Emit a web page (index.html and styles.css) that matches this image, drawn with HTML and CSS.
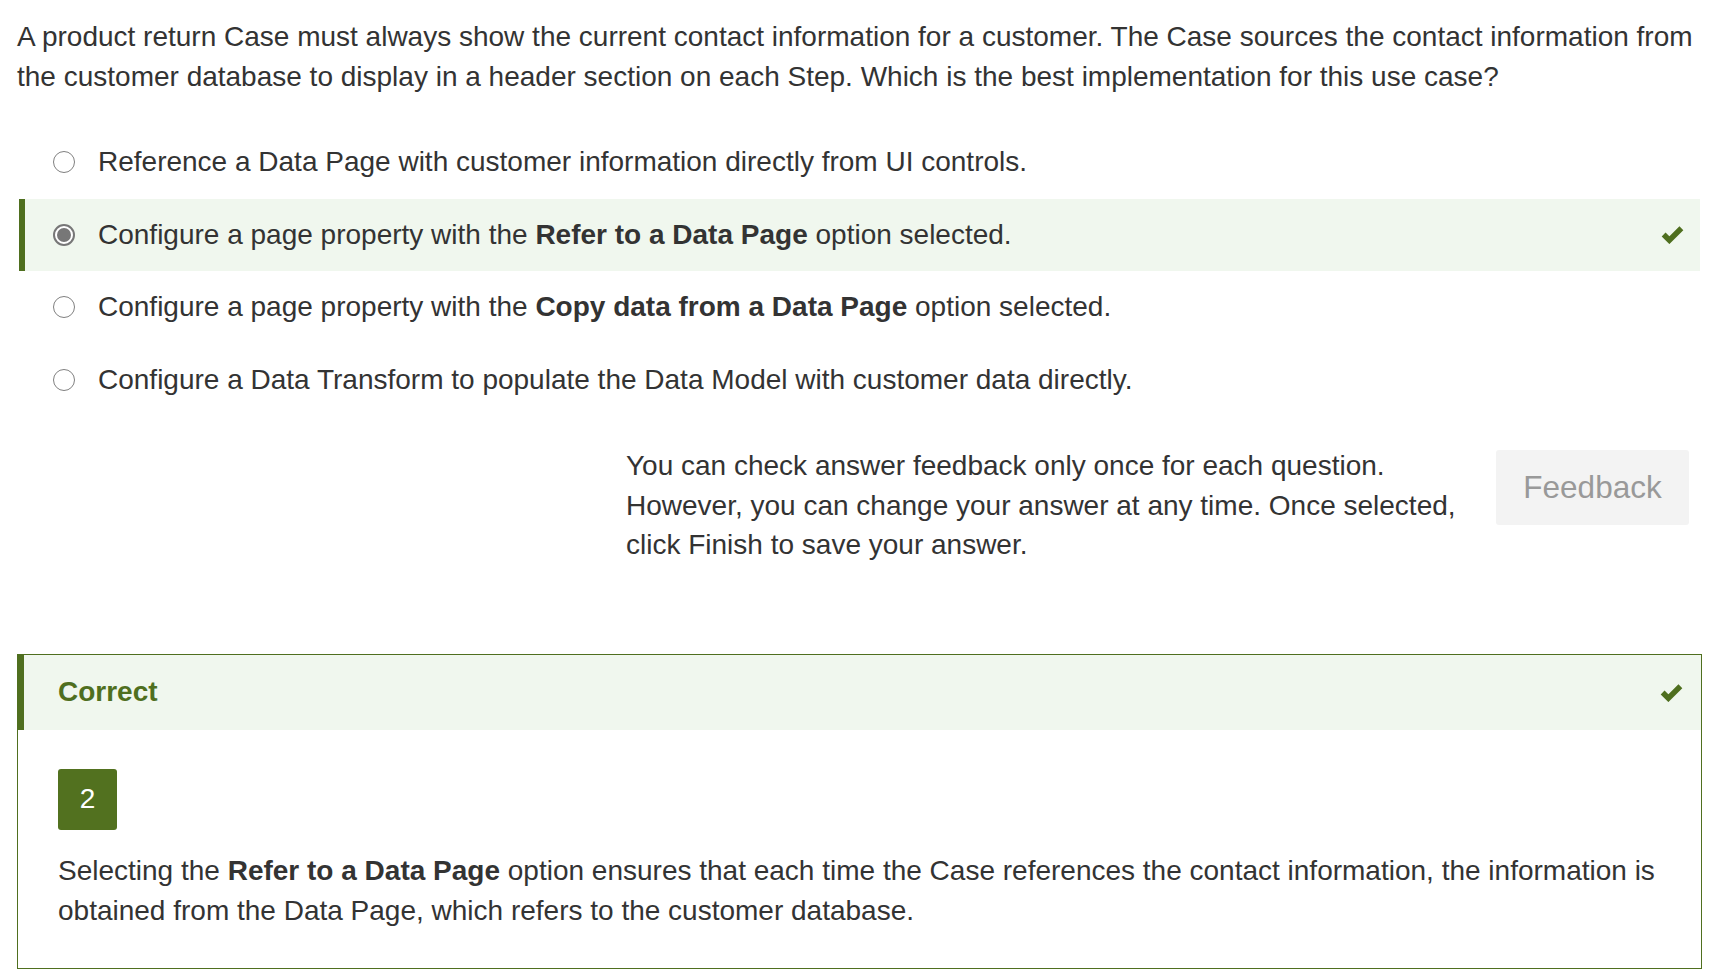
FILE: index.html
```html
<!DOCTYPE html>
<html lang="en">
<head>
<meta charset="utf-8">
<title>Question</title>
<link rel="stylesheet" href="styles.css">
</head>
<body>
<div class="page">
  <p class="question">A product return Case must always show the current contact information for a customer. The Case sources the contact information from the customer database to display in a header section on each Step. Which is the best implementation for this use case?</p>

  <div class="options">
    <div class="option">
      <span class="radio"></span>
      <span class="label">Reference a Data Page with customer information directly from UI controls.</span>
    </div>
    <div class="option selected">
      <span class="radio checked"></span>
      <span class="label">Configure a page property with the <b>Refer to a Data Page</b> option selected.</span>
      <svg class="check" viewBox="0 0 22 18" width="23" height="19"><polyline points="2.5,9 8,14.5 19.5,3" fill="none" stroke="#4f6f1f" stroke-width="5.2"/></svg>
    </div>
    <div class="option">
      <span class="radio"></span>
      <span class="label">Configure a page property with the <b>Copy data from a Data Page</b> option selected.</span>
    </div>
    <div class="option">
      <span class="radio"></span>
      <span class="label">Configure a Data Transform to populate the Data Model with customer data directly.</span>
    </div>
  </div>

  <div class="feedback-row">
    <p class="feedback-note">You can check answer feedback only once for each question. However, you can change your answer at any time. Once selected, click Finish to save your answer.</p>
    <button class="feedback-btn" type="button">Feedback</button>
  </div>

  <div class="result">
    <div class="result-head">
      <span class="result-title">Correct</span>
      <svg class="check" viewBox="0 0 22 18" width="23" height="19"><polyline points="2.5,9 8,14.5 19.5,3" fill="none" stroke="#4f6f1f" stroke-width="5.2"/></svg>
    </div>
    <div class="result-body">
      <div class="badge">2</div>
      <p class="explain">Selecting the <b>Refer to a Data Page</b> option ensures that each time the Case references the contact information, the information is obtained from the Data Page, which refers to the customer database.</p>
    </div>
  </div>
</div>
</body>
</html>
```

FILE: styles.css
```css
* { box-sizing: border-box; }

html, body {
  margin: 0;
  padding: 0;
  background: #ffffff;
}

body {
  font-family: "Liberation Sans", Arial, sans-serif;
  font-size: 28px;
  line-height: 40.5px;
  color: #333333;
}

.page {
  padding: 17px 19px 0 17px;
}

.question {
  margin: 0;
  line-height: 40px;
}

.options {
  margin: 29px 2px 0 2px;
}

.option {
  display: flex;
  align-items: center;
  padding: 16px 16px 16px 28px;
  border-left: 6px solid transparent;
}

.option.selected {
  background: #f0f7ee;
  border-left-color: #4f6f1f;
}

.radio {
  flex: 0 0 22px;
  width: 22px;
  height: 22px;
  border: 1.5px solid #808080;
  border-radius: 50%;
  background: #fff;
  margin-right: 23px;
  position: relative;
}

.radio.checked {
  border: 2px solid #777777;
}

.radio.checked::after {
  content: "";
  position: absolute;
  left: 2px;
  top: 2px;
  width: 14px;
  height: 14px;
  border-radius: 50%;
  background: #777777;
}

.label {
  flex: 1 1 auto;
}

.label b, .explain b {
  font-weight: bold;
  color: #333333;
}

.check {
  flex: 0 0 23px;
  display: block;
}

.feedback-row {
  display: flex;
  justify-content: flex-end;
  align-items: flex-start;
  gap: 20px;
  margin: 30px 13px 0 0;
}

.feedback-note {
  margin: 0;
  width: 850px;
  flex: 0 0 850px;
  line-height: 39.5px;
}

.feedback-btn {
  flex: 0 0 193px;
  width: 193px;
  height: 75px;
  margin-top: 4px;
  border: none;
  border-radius: 3px;
  background: #f3f3f3;
  color: #999999;
  font-family: "Liberation Sans", Arial, sans-serif;
  font-size: 31.5px;
  padding: 0;
}

.result {
  margin-top: 89px;
  border: 1px solid #4f6f1f;
}

.result-head {
  display: flex;
  align-items: center;
  justify-content: space-between;
  height: 75px;
  background: #f0f7ee;
  border-left: 6px solid #4f6f1f;
  padding: 0 18px 0 34px;
}

.result-title {
  font-weight: bold;
  color: #4f6f1f;
}

.result-body {
  padding: 39px 40px 37px 40px;
}

.badge {
  width: 59px;
  height: 61px;
  background: #52711f;
  color: #ffffff;
  border-radius: 3px;
  display: flex;
  align-items: center;
  justify-content: center;
}

.explain {
  margin: 21px 0 0 0;
  line-height: 40px;
}
```
